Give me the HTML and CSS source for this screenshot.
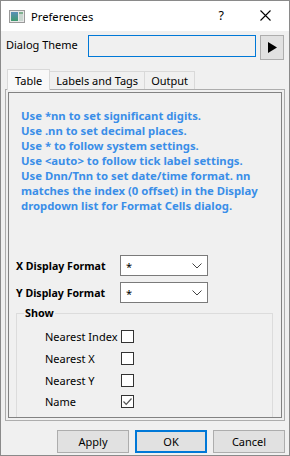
FILE: index.html
```html
<!DOCTYPE html>
<html>
<head>
<meta charset="utf-8">
<link rel="stylesheet" href="styles.css">
</head>
<body>
<div class="window">
  <div class="titlebar">
    <svg class="app-icon" width="16" height="13" viewBox="0 0 16 13">
      <defs>
        <linearGradient id="g1" x1="0" y1="0" x2="0" y2="1">
          <stop offset="0" stop-color="#5a8fb8"/>
          <stop offset="1" stop-color="#3f9a6e"/>
        </linearGradient>
      </defs>
      <rect x="0.5" y="0.5" width="15" height="12" fill="#e8e8e8" stroke="#9a9a9a"/>
      <rect x="2" y="2" width="7" height="9" fill="url(#g1)"/>
      <rect x="10" y="2" width="4" height="9" fill="#c9d6cf"/>
      <rect x="10" y="2" width="4" height="2" fill="#7fb08f"/>
    </svg>
    <span class="title">Preferences</span>
    <span class="help">?</span>
    <svg class="close" width="11" height="11" viewBox="0 0 11 11">
      <path d="M0.5 0.5 L10.5 10.5 M10.5 0.5 L0.5 10.5" stroke="#000" stroke-width="1.1" fill="none"/>
    </svg>
  </div>
  <div class="body">
    <div class="theme-row">
      <span class="theme-label">Dialog Theme</span>
      <div class="theme-field"></div>
      <div class="theme-btn">
        <svg width="9" height="11" viewBox="0 0 9 11"><path d="M0 0 L9 5.5 L0 11 Z" fill="#000"/></svg>
      </div>
    </div>
    <div class="tabs">
      <div class="tab tab-active">Table</div>
      <div class="tab">Labels and Tags</div>
      <div class="tab">Output</div>
    </div>
    <div class="panel">
      <div class="panel-inner">
        <div class="notes">
          <div>Use *nn to set significant digits.</div>
          <div>Use .nn to set decimal places.</div>
          <div>Use * to follow system settings.</div>
          <div>Use &lt;auto&gt; to follow tick label settings.</div>
          <div>Use Dnn/Tnn to set date/time format. nn</div>
          <div>matches the index (0 offset) in the Display</div>
          <div>dropdown list for Format Cells dialog.</div>
        </div>
        <div class="form-row first">
          <span class="form-label">X Display Format</span>
          <div class="combo"><span>*</span>
            <svg width="10" height="6" viewBox="0 0 10 6"><path d="M0.5 0.5 L5 5 L9.5 0.5" stroke="#444" fill="none"/></svg>
          </div>
        </div>
        <div class="form-row">
          <span class="form-label">Y Display Format</span>
          <div class="combo"><span>*</span>
            <svg width="10" height="6" viewBox="0 0 10 6"><path d="M0.5 0.5 L5 5 L9.5 0.5" stroke="#444" fill="none"/></svg>
          </div>
        </div>
        <fieldset class="group">
          <legend>Show</legend>
          <div class="check-row"><span class="check-label">Nearest Index</span><span class="box"></span></div>
          <div class="check-row"><span class="check-label">Nearest X</span><span class="box"></span></div>
          <div class="check-row"><span class="check-label">Nearest Y</span><span class="box"></span></div>
          <div class="check-row"><span class="check-label">Name</span><span class="box">
            <svg width="11" height="11" viewBox="0 0 11 11"><path d="M1.5 5.5 L4.2 8.3 L9.5 2.5" stroke="#555" stroke-width="1.2" fill="none"/></svg>
          </span></div>
        </fieldset>
      </div>
    </div>
    <div class="buttons">
      <div class="btn">Apply</div>
      <div class="btn btn-default">OK</div>
      <div class="btn">Cancel</div>
    </div>
  </div>
</div>
</body>
</html>
```

FILE: styles.css
```css
html, body {
  margin: 0;
  padding: 0;
}
body {
  font-family: "Noto Sans", "Open Sans", sans-serif;
  font-size: 11px;
  color: #000;
  background: #fff;
}
.window {
  width: 288px;
  height: 454px;
  border: 1px solid #8a8a8a;
  background: #f0f0f0;
  display: flex;
  flex-direction: column;
  overflow: hidden;
}
.titlebar {
  height: 30px;
  background: #fff;
  display: flex;
  align-items: center;
  flex: none;
}
.app-icon {
  margin-left: 8px;
  margin-top: 1px;
}
.title {
  margin-left: 6px;
  font-size: 11.2px;
  flex: 1;
}
.help {
  font-size: 12.5px;
  margin-right: 36px;
  margin-top: -1px;
}
.close {
  margin-right: 18px;
  margin-top: -1px;
}
.body {
  padding: 0 4px;
  flex: 1;
}
.theme-row {
  margin-top: 4px;
  height: 25px;
  display: flex;
  align-items: flex-start;
}
.theme-label {
  margin-left: 1px;
  margin-top: 2px;
  width: 82px;
  white-space: nowrap;
}
.theme-field {
  width: 166px;
  height: 20px;
  border: 1px solid #0078d7;
  background: #f0f0f0;
}
.theme-btn {
  margin-left: 4px;
  width: 22px;
  height: 23px;
  border: 1px solid #adadad;
  background: #e1e1e1;
  display: flex;
  align-items: center;
  justify-content: center;
}
.tabs {
  margin-top: 11px;
  margin-left: 2px;
  height: 18px;
  display: flex;
  align-items: flex-end;
}
.tab {
  height: 17px;
  border: 1px solid #d9d9d9;
  border-bottom: none;
  background: #f0f0f0;
  padding: 0 6px;
  display: flex;
  align-items: center;
  margin-left: -1px;
  line-height: 1;
  white-space: nowrap;
}
.tab:first-child {
  margin-left: 0;
}
.tab-active {
  position: relative;
  z-index: 1;
  height: 20px;
  margin-bottom: -1px;
  background: #f9f9f9;
  padding: 0 7px;
  border-color: #d9d9d9;
}
.panel {
  width: 274px;
  height: 326px;
  border: 1px solid #adadad;
  padding: 2px;
}
.panel-inner {
  height: 324px;
  border: 1px solid #828282;
  overflow: hidden;
}
.notes {
  margin: 15px 0 0 12px;
  color: #3a8ee8;
  font-weight: bold;
  font-size: 11.3px;
  line-height: 15px;
  white-space: nowrap;
}
.form-row {
  display: flex;
  align-items: center;
  margin-left: 7px;
  height: 21px;
  margin-top: 6px;
}
.form-row.first {
  margin-top: 42px;
}
.form-label {
  width: 104px;
  font-weight: bold;
  font-size: 10.6px;
  white-space: nowrap;
}
.combo {
  border: 1px solid #7a7a7a;
  background: #fff;
  display: flex;
  align-items: center;
  justify-content: space-between;
  padding: 0 5px 0 5px;
  box-sizing: border-box;
  width: 88px;
  height: 21px;
}
.combo span {
  margin-top: 1px;
}
.group {
  margin: 2px 8px 0 7px;
  padding: 5px 0 0 28px;
  border: 1px solid #dcdcdc;
  height: 120px;
}
.group legend {
  font-weight: bold;
  font-size: 10.8px;
  padding: 0 1px;
  margin-left: -21px;
  line-height: 16px;
}
.check-row {
  height: 21.7px;
  display: flex;
  align-items: center;
}
.check-label {
  width: 76px;
  white-space: nowrap;
}
.box {
  width: 11px;
  height: 11px;
  border: 1px solid #333;
  background: #fff;
  display: flex;
  align-items: center;
  justify-content: center;
}
.buttons {
  margin-top: 9px;
  display: flex;
  justify-content: flex-end;
  gap: 6px;
}
.btn {
  width: 70px;
  height: 21px;
  border: 1px solid #adadad;
  background: #e1e1e1;
  display: flex;
  align-items: center;
  justify-content: center;
}
.btn-default {
  width: 68px;
  height: 19px;
  border: 2px solid #0078d7;
}
```
